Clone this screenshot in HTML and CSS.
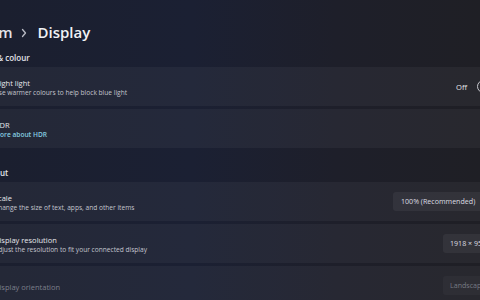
FILE: index.html
```html
<!DOCTYPE html>
<html lang="en">
<head>
<meta charset="utf-8">
<title>Display</title>
<link rel="stylesheet" href="styles.css">
</head>
<body>
<main class="page">
  <header class="breadcrumb">
    <span class="crumb">System</span>
    <svg class="crumb-sep" viewBox="0 0 6 10" width="6" height="10"><path d="M1.5 1.5 L4.5 5 L1.5 8.5" fill="none" stroke="currentColor" stroke-width="1.3" stroke-linecap="round" stroke-linejoin="round"/></svg>
    <h1 class="crumb crumb-current">Display</h1>
  </header>

  <section class="group">
    <h2 class="group-title">Brightness &amp; colour</h2>
    <div class="card">
      <svg class="card-icon" viewBox="0 0 16 16"><circle cx="8" cy="8" r="5" fill="none" stroke="currentColor" stroke-width="1.2"/></svg>
      <div class="card-text">
        <div class="card-title">Night light</div>
        <div class="card-desc">Use warmer colours to help block blue light</div>
      </div>
      <div class="card-control">
        <span class="toggle-label">Off</span>
        <span class="toggle"><span class="toggle-knob"></span></span>
      </div>
    </div>
    <div class="card">
      <svg class="card-icon" viewBox="0 0 16 16"><rect x="2" y="3" width="12" height="9" rx="1" fill="none" stroke="currentColor" stroke-width="1.2"/></svg>
      <div class="card-text">
        <div class="card-title">HDR</div>
        <a class="card-link" href="#">More about HDR</a>
      </div>
      <div class="card-control">
        <svg class="chevron" viewBox="0 0 6 10" width="6" height="10"><path d="M1.5 1.5 L4.5 5 L1.5 8.5" fill="none" stroke="currentColor" stroke-width="1.2" stroke-linecap="round" stroke-linejoin="round"/></svg>
      </div>
    </div>
  </section>

  <section class="group">
    <h2 class="group-title">Scale &amp; layout</h2>
    <div class="card">
      <svg class="card-icon" viewBox="0 0 16 16"><rect x="2" y="2" width="12" height="12" rx="1" fill="none" stroke="currentColor" stroke-width="1.2"/></svg>
      <div class="card-text">
        <div class="card-title">Scale</div>
        <div class="card-desc">Change the size of text, apps, and other items</div>
      </div>
      <div class="card-control">
        <div class="combo combo-scale">100% (Recommended)</div>
      </div>
    </div>
    <div class="card">
      <svg class="card-icon" viewBox="0 0 16 16"><rect x="2" y="3" width="12" height="9" rx="1" fill="none" stroke="currentColor" stroke-width="1.2"/></svg>
      <div class="card-text">
        <div class="card-title">Display resolution</div>
        <div class="card-desc">Adjust the resolution to fit your connected display</div>
      </div>
      <div class="card-control">
        <div class="combo combo-res">1918 × 958</div>
      </div>
    </div>
    <div class="card card-disabled">
      <svg class="card-icon" viewBox="0 0 16 16"><rect x="3" y="2" width="10" height="12" rx="1" fill="none" stroke="currentColor" stroke-width="1.2"/></svg>
      <div class="card-text">
        <div class="card-title">Display orientation</div>
      </div>
      <div class="card-control">
        <div class="combo combo-res">Landscape</div>
      </div>
    </div>
  </section>
</main>
</body>
</html>
```

FILE: styles.css
```css
* { box-sizing: border-box; }

html, body {
  margin: 0;
  height: 100%;
}

body {
  overflow: hidden;
  background: linear-gradient(90deg, #1b1f2f 0%, #1b2033 40%, #1e1f2a 70%, #1f1f25 100%);
  font-family: "Open Sans", "Noto Sans", sans-serif;
  color: #e4e5ea;
}

.page {
  width: 560px;
  margin-left: -46px;
  padding-top: 22px;
}

.breadcrumb {
  display: flex;
  align-items: center;
  margin-left: 6px;
  height: 20px;
  line-height: 20px;
}

.crumb {
  margin: 0;
  font-size: 15px;
  font-weight: 600;
  color: #e2e3e9;
}

.crumb-current {
  color: #f1f2f5;
}

.crumb-sep {
  margin: 1px 10px 0 9px;
  color: #b9bbc4;
}

.group-title {
  margin: 11px 0 4px 0;
  font-size: 8px;
  line-height: 10px;
  font-weight: 600;
  color: #e3e4ea;
}

.group + .group .group-title {
  margin-top: 20px;
}

.card {
  display: flex;
  align-items: center;
  height: 39px;
  padding: 0 11px;
  margin-bottom: 3px;
  background: rgba(255, 255, 255, 0.045);
  border-radius: 3px;
}

.card-icon {
  width: 13px;
  height: 13px;
  margin-right: 16px;
  flex: none;
  color: #d8d9de;
}

.card-text {
  flex: 1;
  display: flex;
  flex-direction: column;
  padding-top: 2px;
  min-width: 0;
}

.card-title {
  font-size: 7.5px;
  line-height: 10px;
  color: #e6e7ec;
}

.card-desc {
  font-size: 6.6px;
  line-height: 10px;
  color: #c3c5ce;
}

.card-link {
  font-size: 6.6px;
  line-height: 10px;
  font-weight: 600;
  color: #86cde0;
  text-decoration: none;
}

.card-control {
  display: flex;
  align-items: center;
  flex: none;
}

.toggle-label {
  font-size: 7.6px;
  color: #e4e5ea;
  margin-right: 10px;
}

.toggle {
  display: flex;
  align-items: center;
  width: 26px;
  height: 13px;
  padding-left: 3px;
  border: 1px solid #c9cad0;
  border-radius: 7px;
}

.toggle-knob {
  width: 7px;
  height: 7px;
  border-radius: 50%;
  background: #c9cad0;
}

.chevron {
  color: #c9cad0;
}

.combo {
  height: 19px;
  line-height: 19px;
  padding-left: 8px;
  font-size: 7.1px;
  white-space: nowrap;
  overflow: hidden;
  color: #dcdde2;
  background: rgba(255, 255, 255, 0.055);
  border-radius: 3px;
}

.combo-scale {
  width: 110px;
}

.combo-res {
  width: 60px;
  padding-left: 7px;
}

.card-disabled .card-title {
  color: #7c7f8a;
}

.card-disabled .card-icon {
  color: #7c7f8a;
}

.card-disabled .combo {
  color: #767983;
  background: rgba(255, 255, 255, 0.03);
}
```
